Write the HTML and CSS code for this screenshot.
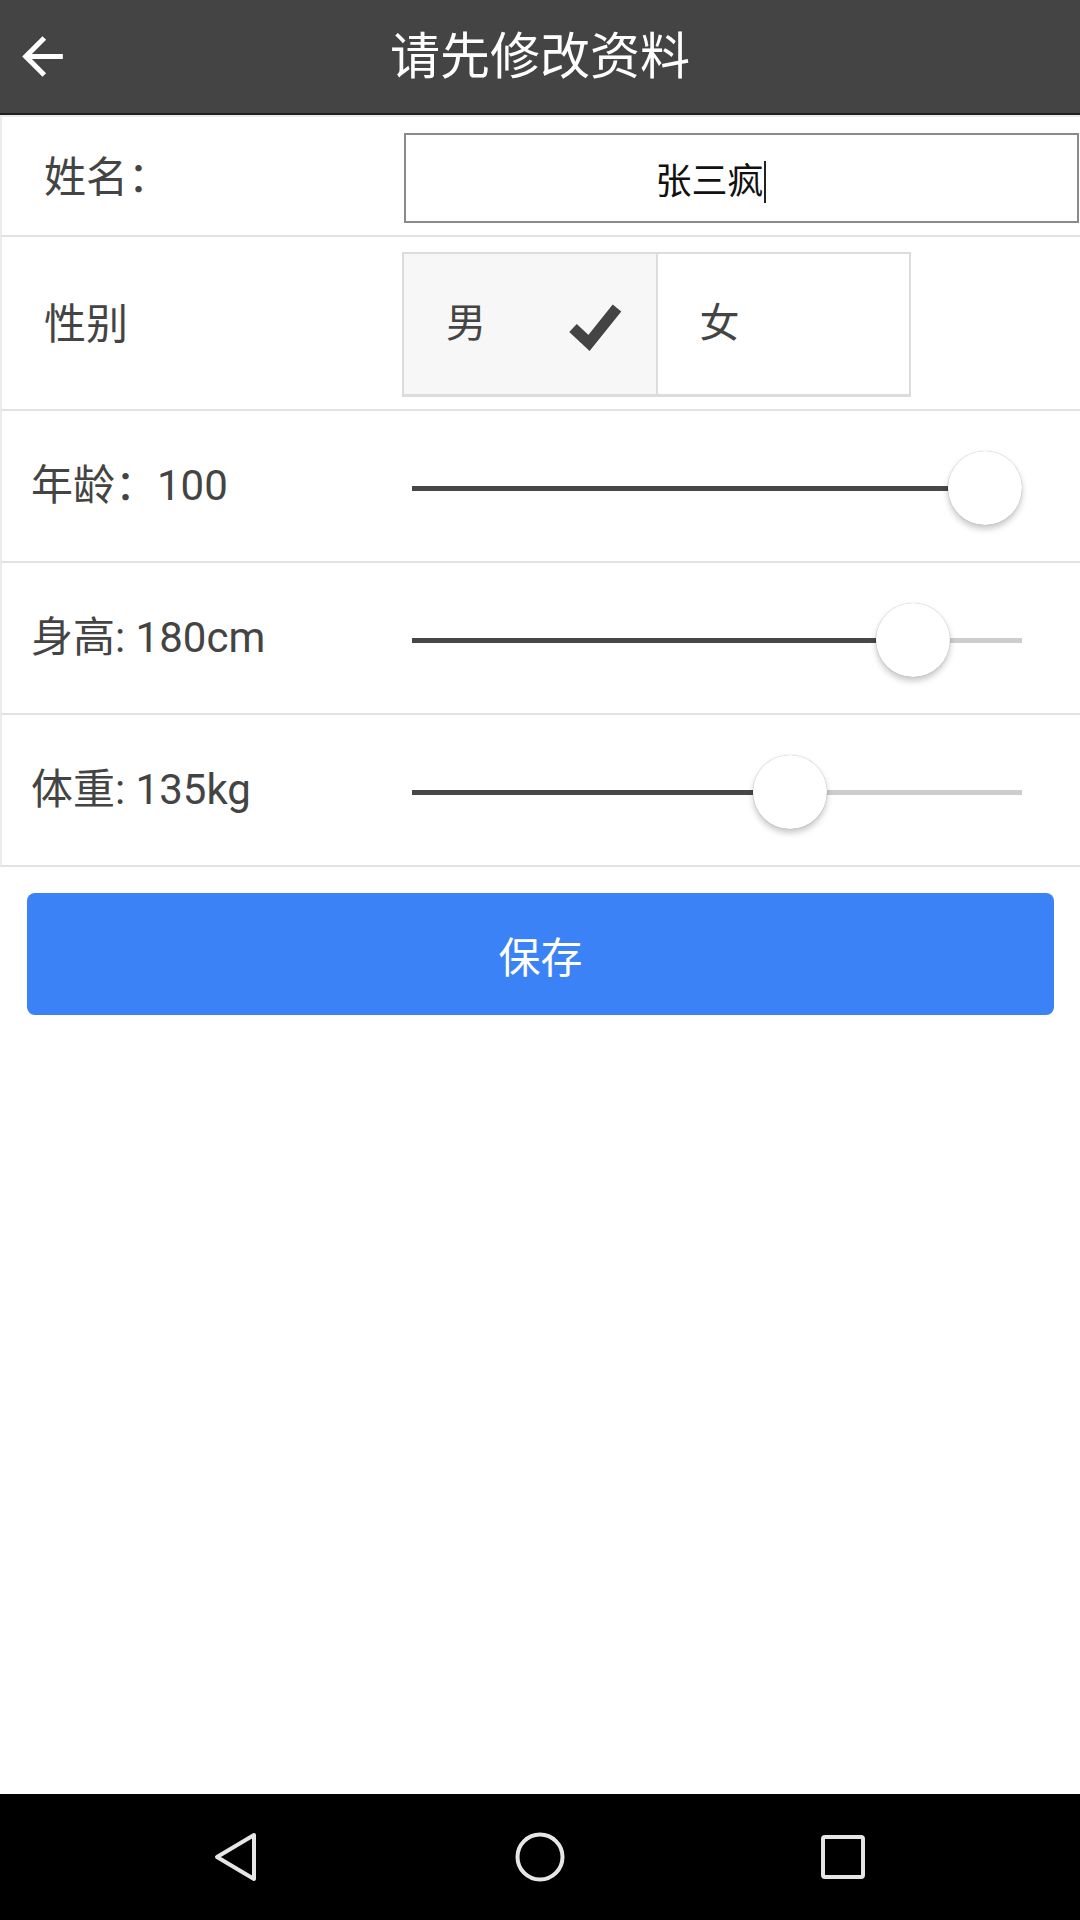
FILE: index.html
```html
<!DOCTYPE html>
<html lang="zh-CN">
<head>
<meta charset="utf-8">
<title>请先修改资料</title>
<link rel="stylesheet" href="styles.css">
</head>
<body>
<div class="app">
  <header class="topbar">
    <svg class="back" viewBox="0 0 24 24" width="61" height="61"><path fill="#fff" d="M20 11H7.83l5.59-5.59L12 4l-8 8 8 8 1.41-1.41L7.83 13H20v-2z"/></svg>
    <h1 class="title">请先修改资料</h1>
  </header>
  <main class="content">
    <div class="list">
      <div class="row row-name">
        <div class="label label-wide">姓名：</div>
        <div class="input"><span class="input-text">张三疯</span><span class="caret"></span></div>
      </div>
      <div class="row row-gender">
        <div class="label label-gender">性别</div>
        <div class="seg">
          <div class="seg-cell seg-on"><span>男</span>
            <svg class="check" width="56" height="52" viewBox="0 0 56 52"><polyline points="6,27 22,42 50,7" fill="none" stroke="#444" stroke-width="11" stroke-linejoin="miter"/></svg>
          </div>
          <div class="seg-cell"><span>女</span></div>
        </div>
      </div>
      <div class="row row-slider">
        <div class="label label-slider">年龄：100</div>
        <div class="slider" style="--p: 1">
          <div class="track"></div><div class="fill"></div><div class="thumb"></div>
        </div>
      </div>
      <div class="row row-slider">
        <div class="label label-slider">身高: 180cm</div>
        <div class="slider" style="--p: 0.866">
          <div class="track"></div><div class="fill"></div><div class="thumb"></div>
        </div>
      </div>
      <div class="row row-slider">
        <div class="label label-slider">体重: 135kg</div>
        <div class="slider" style="--p: 0.636">
          <div class="track"></div><div class="fill"></div><div class="thumb"></div>
        </div>
      </div>
    </div>
    <button class="save">保存</button>
  </main>
  <nav class="navbar">
    <svg width="60" height="60" viewBox="0 0 60 60"><polygon points="46,8 9,30 46,52" fill="none" stroke="#e6e6e6" stroke-width="4" stroke-linejoin="round"/></svg>
    <svg width="60" height="60" viewBox="0 0 60 60"><circle cx="30" cy="30" r="22.5" fill="none" stroke="#e6e6e6" stroke-width="4"/></svg>
    <svg width="60" height="60" viewBox="0 0 60 60"><rect x="11" y="10" width="40" height="40" rx="2" fill="none" stroke="#e6e6e6" stroke-width="4"/></svg>
  </nav>
</div>
</body>
</html>
```
FILE: styles.css
```css
* { box-sizing: border-box; }
html, body { margin: 0; padding: 0; }
body {
  width: 1080px;
  height: 1920px;
  background: #fff;
  font-family: Roboto, "Noto Sans CJK SC", "Noto Sans", sans-serif;
  color: #444;
}
.app {
  display: flex;
  flex-direction: column;
  height: 1920px;
}
.topbar {
  position: relative;
  height: 115px;
  background: #444;
  border-bottom: 2px solid #1f1f1f;
  display: flex;
  align-items: center;
  justify-content: center;
  flex: 0 0 auto;
}
.back {
  position: absolute;
  left: 12px;
  top: 26px;
}
.title {
  margin: 0;
  font-weight: normal;
  font-size: 50px;
  color: #fff;
  line-height: 1;
}
.content {
  flex: 1 1 auto;
}
.list {
  border-top: 2px solid #eee;
}
.row {
  display: flex;
  align-items: center;
  border-left: 2px solid #ececec;
  border-bottom: 2px solid #e2e2e2;
}
.label {
  font-size: 42px;
  line-height: 1;
  flex: 0 0 auto;
}
.row-name { height: 120px; padding-top: 4px; padding-left: 42px; }
.label-wide { width: 360px; }
.input {
  width: 675px;
  height: 90px;
  border: 2px solid #8a8a8a;
  display: flex;
  align-items: center;
  justify-content: center;
  padding-right: 62px;
  color: #111;
  font-size: 36px;
}
.caret {
  display: inline-block;
  width: 2px;
  height: 42px;
  background: #222;
  margin-top: 8px;
}
.row-gender { height: 174px; padding-top: 3px; padding-left: 42px; }
.label-gender { width: 358px; }
.seg {
  display: flex;
  width: 509px;
  height: 145px;
  border: 2px solid #dcdcdc;
  border-bottom-width: 3px;
}
.seg-cell {
  flex: 1 1 0;
  display: flex;
  align-items: center;
  padding-left: 42px;
  padding-right: 33px;
  font-size: 40px;
  color: #444;
  background: #fff;
  padding-bottom: 8px;
}
.seg-on {
  background: #f7f7f7;
  border-right: 2px solid #dcdcdc;
}
.check {
  margin-left: auto;
  margin-top: 14px;
}
.row-slider { height: 152px; padding-left: 29px; }
.label-slider { width: 381px; }
.slider {
  position: relative;
  width: 610px;
  height: 74px;
  margin-top: 4px;
}
.track, .fill {
  position: absolute;
  left: 0;
  top: 35px;
  height: 5px;
}
.track { right: 0; background: #cdcdcd; }
.fill {
  width: calc(var(--p) * (100% - 74px));
  background: #474747;
}
.thumb {
  position: absolute;
  top: 0;
  left: calc(var(--p) * (100% - 74px));
  width: 74px;
  height: 74px;
  border-radius: 50%;
  background: #fff;
  box-shadow: 0 0 1px rgba(0,0,0,0.35), 0 4px 6px rgba(0,0,0,0.22);
}
.save {
  display: block;
  margin: 26px 26px 0 27px;
  width: 1027px;
  height: 122px;
  border: none;
  border-radius: 8px;
  background: #3a82f6;
  color: #fff;
  font-family: Roboto, "Noto Sans CJK SC", sans-serif;
  font-size: 42px;
  padding: 0;
}
.navbar {
  flex: 0 0 126px;
  background: #000;
  display: flex;
  align-items: center;
  justify-content: center;
}
.navbar svg { margin: 0 121px; }
```
